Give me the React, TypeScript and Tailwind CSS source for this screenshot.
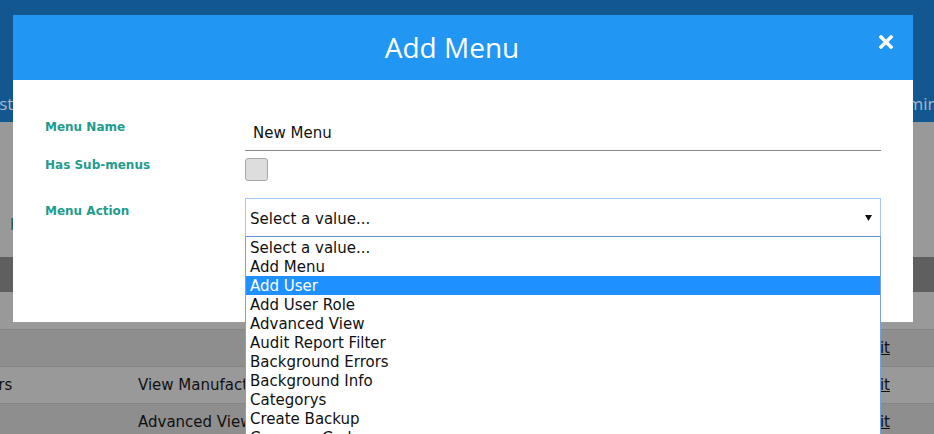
import React from 'react';

const options = [
  'Select a value...',
  'Add Menu',
  'Add User',
  'Add User Role',
  'Advanced View',
  'Audit Report Filter',
  'Background Errors',
  'Background Info',
  'Categorys',
  'Create Backup',
  'Currency Codes',
  'Dashboard',
];

const font = { fontFamily: '"DejaVu Sans", Verdana, sans-serif' };

const App: React.FC = () => {
  return (
    <div className="relative w-[934px] h-[434px] overflow-hidden bg-[#999999] font-['DejaVu_Sans',Verdana,sans-serif]">
      {/* dimmed page behind the modal */}
      <div className="flex flex-col">
        <div className="h-[122px] bg-[#12578f] flex items-end justify-between pb-[6px] text-[17px] text-[#a9b8c8] font-['Open_Sans',sans-serif]">
          <span className="-ml-[14px]">List</span>
          <span className="-mr-[4px]">Admin</span>
        </div>
        <div className="h-[135px] flex items-center">
          <span className="ml-[10px] mt-[72px] text-[15px] text-[#1e5b54]">Filter</span>
        </div>
        <div className="h-[35px] bg-[#5f5f5f]"></div>
        <div className="h-[37px] bg-[#999999]"></div>
        <div className="h-[37px] bg-[#8e8e8e] border-t border-[#858585] flex items-center text-[15px] text-[#111]">
          <span className="ml-auto mr-[44px] underline">Edit</span>
        </div>
        <div className="h-[37px] bg-[#999999] border-t border-[#858585] flex items-center text-[15px] text-[#111]">
          <span className="w-[138px] -ml-[96px] whitespace-nowrap">Manufacturers</span>
          <span className="ml-[96px] whitespace-nowrap">View Manufacturers</span>
          <span className="ml-auto mr-[44px] underline">Edit</span>
        </div>
        <div className="h-[37px] bg-[#8e8e8e] border-t border-[#858585] flex items-center text-[15px] text-[#111]">
          <span className="ml-[138px] whitespace-nowrap">Advanced View</span>
          <span className="ml-auto mr-[44px] underline">Edit</span>
        </div>
      </div>

      {/* modal */}
      <div className="absolute left-[13px] top-[15px] w-[900px] bg-white">
        <div className="relative h-[65px] bg-[#2196f3] flex items-center justify-center pr-[22px]">
          <h2 className="text-[28px] text-white font-['Open_Sans',sans-serif] font-normal leading-none -mt-[2px]">Add Menu</h2>
          <button className="absolute right-[20px] top-[20px] w-[14px] h-[14px] text-white">
            <svg viewBox="0 0 14 14" width="14" height="14">
              <path d="M2 2 L12 12 M12 2 L2 12" stroke="white" strokeWidth="3.4" strokeLinecap="square" />
            </svg>
          </button>
        </div>
        <div className="h-[242px] px-[32px] pt-[33px]" style={font}>
          <div className="grid grid-cols-[200px_1fr]">
            <label className="mt-[7px] text-[12px] leading-[15px] font-bold text-[#1f9c8c]">Menu Name</label>
            <div className="h-[38px] border-b border-[#8a8a8a] flex items-center pl-[8px] pt-[3px] text-[15px] text-[#111]">New Menu</div>

            <label className="mt-[7px] text-[12px] leading-[15px] font-bold text-[#1f9c8c]">Has Sub-menus</label>
            <div className="pt-[7px]">
              <div className="w-[23px] h-[23px] rounded-[3px] border border-[#a8a8a8] bg-[#dddddd]"></div>
            </div>

            <label className="mt-[23px] text-[12px] leading-[15px] font-bold text-[#1f9c8c]">Menu Action</label>
            <div className="mt-[17px] relative">
              <div className="h-[39px] border border-[#a3c5f8] border-b-[#5e91d1] flex items-center pl-[4px] pr-[8px] text-[15px] text-[#111]">
                <span className="pt-[3px]">Select a value...</span>
                <svg className="ml-auto" width="7" height="6" viewBox="0 0 7 6">
                  <path d="M0 0 H7 L3.5 6 Z" fill="#111" />
                </svg>
              </div>
              <ul className="absolute left-0 right-0 top-[39px] z-10 bg-white border-x border-[#7aa0dc] pt-[1px]">
                {options.map((o) => (
                  <li
                    key={o}
                    className={
                      o === 'Add User'
                        ? 'h-[19px] leading-[17px] pt-[2px] pl-[4px] text-[15px] bg-[#1e90ff] text-white'
                        : 'h-[19px] leading-[17px] pt-[2px] pl-[4px] text-[15px] text-[#111]'
                    }
                  >
                    {o}
                  </li>
                ))}
              </ul>
            </div>
          </div>
        </div>
      </div>
    </div>
  );
};

export default App;
